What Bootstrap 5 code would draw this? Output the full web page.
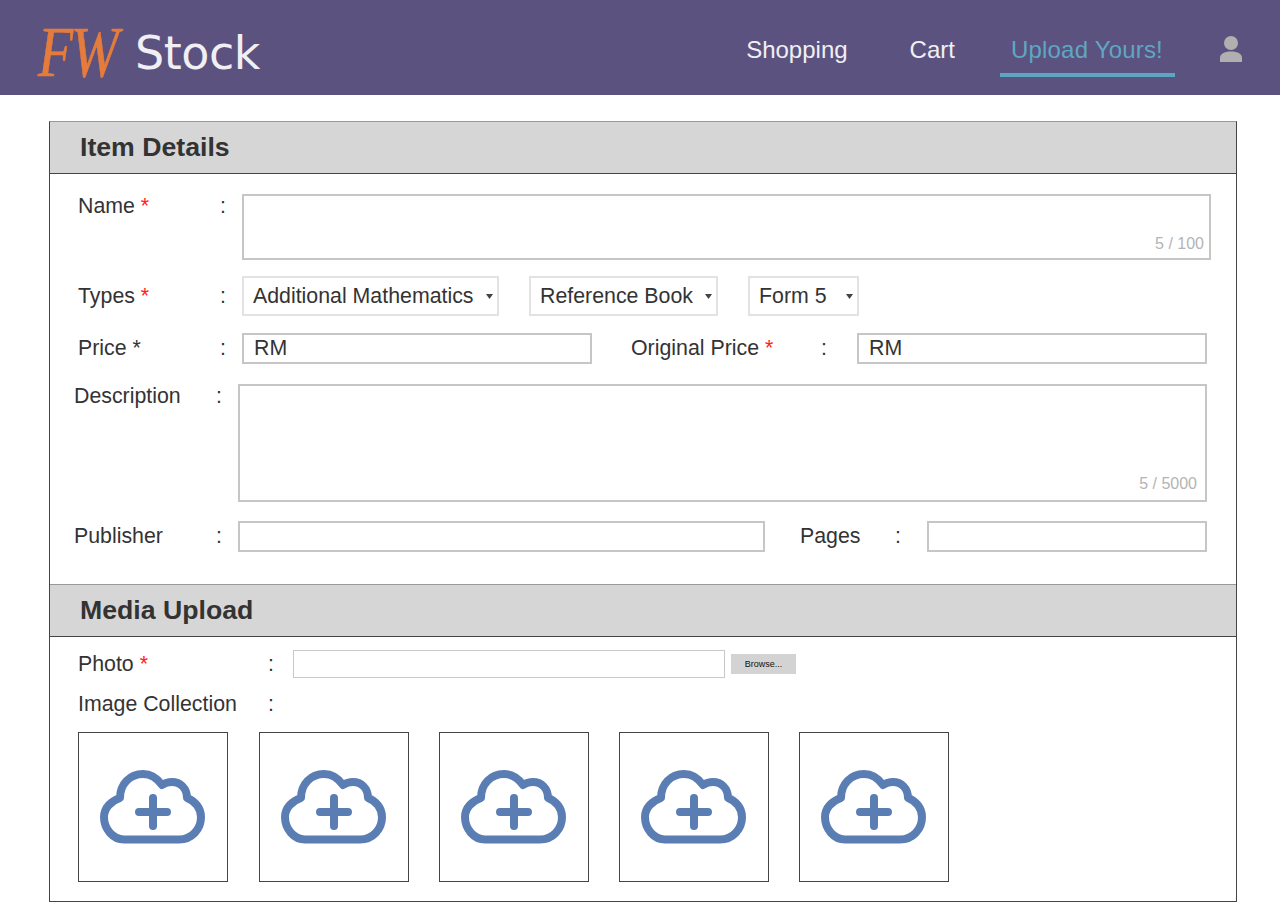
<!DOCTYPE html>
<html lang="en">
<head>
  <meta charset="UTF-8" />
  <meta name="viewport" content="width=device-width, initial-scale=1.0"/>
  <title>FW Stock - Upload Yours</title>
  <link href="https://cdn.jsdelivr.net/npm/bootstrap@5.3.3/dist/css/bootstrap.min.css" rel="stylesheet">
  <style>
    body { font-family: "Liberation Sans", Arial, sans-serif; color: #333; background: #fff; height: 902px; overflow: hidden; }

    /* top bar */
    .top-bar { background: #5c5280; height: 95px; padding: 0 38px 0 38px; }
    .logo-link { display: flex; align-items: center; padding: 0; margin: 0; text-decoration: none; }
    .logo-fw { display: inline-block; width: 84px; font-family: "Liberation Serif", serif; font-style: italic; font-size: 72px; line-height: 1; color: #e57c3c; letter-spacing: -3px; margin-top: -8px; transform: scaleX(.8); transform-origin: left center; -webkit-text-stroke: .6px #e57c3c; }
    .logo-stock { font-family: "DejaVu Sans", sans-serif; font-size: 46px; line-height: 1; color: #f0eff3; margin: -7px 0 0 13px; letter-spacing: -.5px; }
    .top-nav { gap: 0; align-items: flex-start; height: 77px; }
    .top-nav .nav-link { font-size: 24px; line-height: 28px; color: #f0eff3; padding: 36px 0 0; height: 77px; }
    .top-nav .nav-shop { margin-right: 62px; }
    .top-nav .nav-cart { margin-right: 45px; }
    .top-nav .nav-link.active { color: #5fa6c1; border-bottom: 4px solid #5ba6c0; padding-left: 11px; padding-right: 12px; letter-spacing: .2px; }
    .user-icon { margin: 36px 0 0 45px; display: block; }

    /* form sheet */
    .sheet { margin: 26px 43px 0 49px; border: 1px solid #444; border-top-color: #999; height: 781px; }
    .sheet-head { background: #d6d6d6; height: 52px; padding: 9px 0 0 30px; border-bottom: 1px solid #444; font-size: 26.67px; line-height: 32px; font-weight: 700; color: #333; margin: 0; }
    .sheet-head.second { border-top: 1px solid #999; height: 53px; }
    .details-body { height: 410px; padding-top: 20px; }
    .field-row { display: flex; align-items: flex-start; }
    .field-label { font-size: 21.33px; line-height: 26px; color: #333; flex: none; }
    .field-colon { font-size: 21.33px; line-height: 26px; flex: none; }
    .req { color: #f22; }
    .lbl-a { width: 142px; margin-left: 28px; }
    .lbl-b { width: 142px; margin-left: 24px; }
    .col-a { width: 22px; }
    .label-up { margin-top: -1px; }
    .plain-box { border: 2px solid #c6c6c6; border-radius: 0; background: #fff; font-size: 21.33px; line-height: 26px; color: #333; padding: 0 10px; outline: 0; }
    .counter-wrap { position: relative; }
    .counter { position: absolute; font-size: 16px; line-height: 18px; color: #b4b4b4; }
    .name-box { width: 969px; height: 66px; display: block; resize: none; }
    .desc-box { width: 969px; height: 118px; display: block; resize: none; }
    .pick-box.form-select { font-size: 21.33px; line-height: 26px; color: #333; height: 40px; border: 2px solid #e2e2e2; border-radius: 0; padding: 5px 0 5px 9px; background-size: 7px 5px; background-position: right 4px center;
      background-image: url("data:image/svg+xml,%3csvg xmlns='http://www.w3.org/2000/svg' viewBox='0 0 7 5'%3e%3cpath fill='%23444' d='M0 0h7L3.500 5z'/%3e%3c/svg%3e"); }
    .line-box { height: 31px; display: block; }
    .drop-row { height: 40px; margin-top: 16px; }
    .drop-row .field-label, .drop-row .field-colon { margin-top: 7px; }
    .drop-set { display: flex; gap: 30px; }

    /* media */
    .media-body { padding-top: 13px; }
    .photo-line { height: 28px; border: 1px solid #c8c8c8; width: 432px; background: #fff; }
    .browse-btn { width: 65px; height: 20px; background: #d3d3d3; border: 0; border-radius: 0; padding: 0; font-family: "Liberation Sans", sans-serif; font-size: 9px; line-height: 20px; color: #111; margin-left: 6px; margin-top: 4px; }
    .tile-row { display: flex; gap: 30px; margin: 15px 0 0 28px; }
    .upload-tile { width: 150px; height: 150px; border: 1px solid #444; flex: none; background: #fff; }
    .upload-tile:first-child { margin-right: 1px; }
    .upload-tile svg { display: block; margin: -1px; }
    .label-drop { margin-top: 1px; }
  </style>
</head>
<body>

  <nav class="navbar top-bar d-flex justify-content-between align-items-start flex-nowrap">
    <a class="navbar-brand logo-link mt-4" href="#"><span class="logo-fw">FW</span><span class="logo-stock">Stock</span></a>
    <div class="d-flex">
      <ul class="navbar-nav flex-row top-nav">
        <li class="nav-item nav-shop"><a class="nav-link" href="#">Shopping</a></li>
        <li class="nav-item nav-cart"><a class="nav-link" href="#">Cart</a></li>
        <li class="nav-item"><a class="nav-link active" href="#">Upload Yours!</a></li>
      </ul>
      <svg class="user-icon" width="22" height="26" viewBox="0 0 22 26" fill="#b0b0b0"><circle cx="11" cy="7" r="7"/><path d="M0 26v-4c0-4 4-6.500 11-6.500s11 2.500 11 6.500v4z"/></svg>
    </div>
  </nav>

  <div class="sheet">
    <h2 class="sheet-head">Item Details</h2>
    <div class="details-body">
      <div class="field-row">
        <span class="field-label lbl-a label-up">Name <span class="req">*</span></span>
        <span class="field-colon col-a label-up">:</span>
        <div class="counter-wrap">
          <textarea class="plain-box name-box"></textarea>
          <span class="counter" style="right:7px;bottom:7px">5 / 100</span>
        </div>
      </div>
      <div class="field-row drop-row">
        <span class="field-label lbl-a">Types <span class="req">*</span></span>
        <span class="field-colon col-a">:</span>
        <div class="drop-set">
          <select class="form-select pick-box" style="width:257px"><option>Additional Mathematics</option></select>
          <select class="form-select pick-box" style="width:189px"><option>Reference Book</option></select>
          <select class="form-select pick-box" style="width:111px"><option>Form 5</option></select>
        </div>
      </div>
      <div class="field-row" style="margin-top:17px">
        <span class="field-label lbl-a" style="margin-top:2px">Price *</span>
        <span class="field-colon col-a" style="margin-top:2px">:</span>
        <input class="plain-box line-box" style="width:350px" value="RM">
        <span class="field-label" style="width:190px;margin:2px 0 0 39px">Original Price <span class="req">*</span></span>
        <span class="field-colon" style="width:36px;margin-top:2px">:</span>
        <input class="plain-box line-box" style="width:350px" value="RM">
      </div>
      <div class="field-row" style="margin-top:20px">
        <span class="field-label lbl-b label-up">Description</span>
        <span class="field-colon col-a label-up">:</span>
        <div class="counter-wrap">
          <textarea class="plain-box desc-box"></textarea>
          <span class="counter" style="right:10px;bottom:9px">5 / 5000</span>
        </div>
      </div>
      <div class="field-row" style="margin-top:19px">
        <span class="field-label lbl-b" style="margin-top:2px">Publisher</span>
        <span class="field-colon col-a" style="margin-top:2px">:</span>
        <input class="plain-box line-box" style="width:527px">
        <span class="field-label" style="width:95px;margin:2px 0 0 35px">Pages</span>
        <span class="field-colon" style="width:32px;margin-top:2px">:</span>
        <input class="plain-box line-box" style="width:280px">
      </div>
    </div>

    <h2 class="sheet-head second">Media Upload</h2>
    <div class="media-body">
      <div class="field-row">
        <span class="field-label lbl-a label-drop" style="width:190px">Photo <span class="req">*</span></span>
        <span class="field-colon label-drop" style="width:25px">:</span>
        <div class="photo-line"></div>
        <button class="btn browse-btn" type="button">Browse...</button>
      </div>
      <div class="field-row" style="margin-top:13px">
        <span class="field-label lbl-a" style="width:190px">Image Collection</span>
        <span class="field-colon" style="width:25px">:</span>
      </div>
      <div class="tile-row" id="tiles"></div>
    </div>
  </div>

  <script>
    // five identical upload slots
    const cloud = '<svg width="150" height="150" viewBox="0 0 150 150" fill="none" stroke="#5a7db3" stroke-width="8" stroke-linecap="round" stroke-linejoin="round">' +
      '<path d="M46 107.500H101C114 107.500 123 97 123 85C123 76 117 69 109 66C109 56 102 50 94 50C90 50 87 51 84 53C79 46 72 42 65 42C52 42 42 52 42 66C33 69 26 76 26 85C26 97 35 107.500 46 107.500Z"/>' +
      '<path d="M75 66V94M61 80H89"/></svg>';
    document.getElementById('tiles').innerHTML = Array(5).fill('<div class="upload-tile">' + cloud + '</div>').join('');
  </script>
  <script src="https://cdn.jsdelivr.net/npm/bootstrap@5.3.3/dist/js/bootstrap.bundle.min.js"></script>
</body>
</html>
